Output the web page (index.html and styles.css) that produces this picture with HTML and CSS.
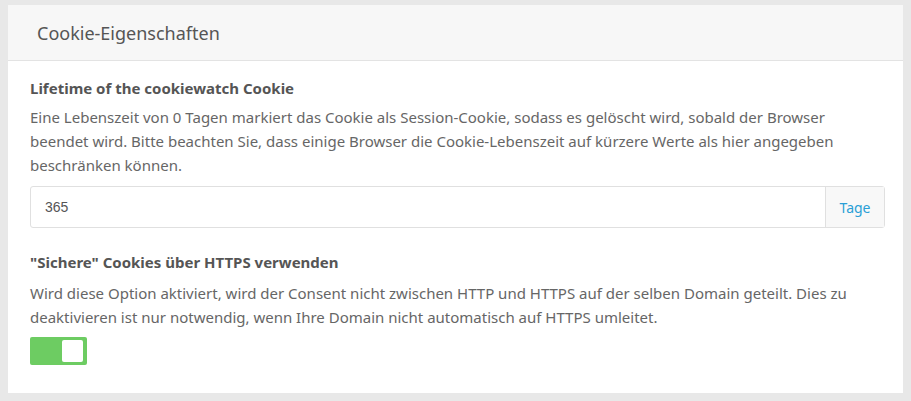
FILE: index.html
```html
<!DOCTYPE html>
<html lang="de">
<head>
<meta charset="utf-8">
<link rel="stylesheet" href="styles.css">
</head>
<body>
<div class="card">
  <div class="card-header">Cookie-Eigenschaften</div>
  <div class="card-body">
    <div class="label">Lifetime of the cookiewatch Cookie</div>
    <p class="help">Eine Lebenszeit von 0 Tagen markiert das Cookie als Session-Cookie, sodass es gelöscht wird, sobald der Browser beendet wird. Bitte beachten Sie, dass einige Browser die Cookie-Lebenszeit auf kürzere Werte als hier angegeben beschränken können.</p>
    <div class="input-group">
      <input class="input" type="text" value="365">
      <span class="addon">Tage</span>
    </div>
    <div class="label label-2">"Sichere" Cookies über HTTPS verwenden</div>
    <p class="help help-2">Wird diese Option aktiviert, wird der Consent nicht zwischen HTTP und HTTPS auf der selben Domain geteilt. Dies zu deaktivieren ist nur notwendig, wenn Ihre Domain nicht automatisch auf HTTPS umleitet.</p>
    <div class="toggle"><span class="knob"></span></div>
  </div>
</div>
</body>
</html>
```
FILE: styles.css
```css
html, body { margin: 0; }
body {
  background: #e8e8e8;
  padding: 5px 8px 8px 8px;
  font-family: "Noto Sans", "Open Sans", sans-serif;
}
.card {
  background: #fff;
  width: 895px;
}
.card-header {
  height: 55px;
  box-sizing: content-box;
  border-bottom: 1px solid #e3e3e3;
  background: #f7f7f7;
  padding-left: 29px;
  display: flex;
  align-items: center;
  font-size: 18px;
  color: #555;
}
.card-body {
  padding: 15px 18px 28px 22px;
}
.label {
  font-size: 15px;
  line-height: 24px;
  font-weight: bold;
  color: #555;
}
.help {
  margin: 5px 0 0 0;
  font-size: 15px;
  line-height: 24px;
  color: #666;
}
.input-group {
  margin-top: 9px;
  display: flex;
  height: 42px;
  box-sizing: border-box;
  border: 1px solid #e0e0e0;
  border-radius: 3px;
}
.input {
  flex: 1;
  border: none;
  outline: none;
  padding: 0 14px;
  font-family: "Liberation Sans", Arial, sans-serif;
  font-size: 14px;
  color: #555;
  background: transparent;
}
.addon {
  width: 58px;
  border-left: 1px solid #e0e0e0;
  background: #f8f8f8;
  color: #2a9fd6;
  font-size: 14px;
  display: flex;
  align-items: center;
  justify-content: center;
}
.label-2 { margin-top: 22px; }
.help-2 { margin-top: 7px; }
.toggle {
  margin-top: 8px;
  width: 57px;
  height: 28px;
  border-radius: 2px;
  background: #6dcc62;
  position: relative;
}
.knob {
  position: absolute;
  right: 4px;
  top: 3px;
  width: 21px;
  height: 22px;
  background: #fff;
  border-radius: 2px;
}
```
